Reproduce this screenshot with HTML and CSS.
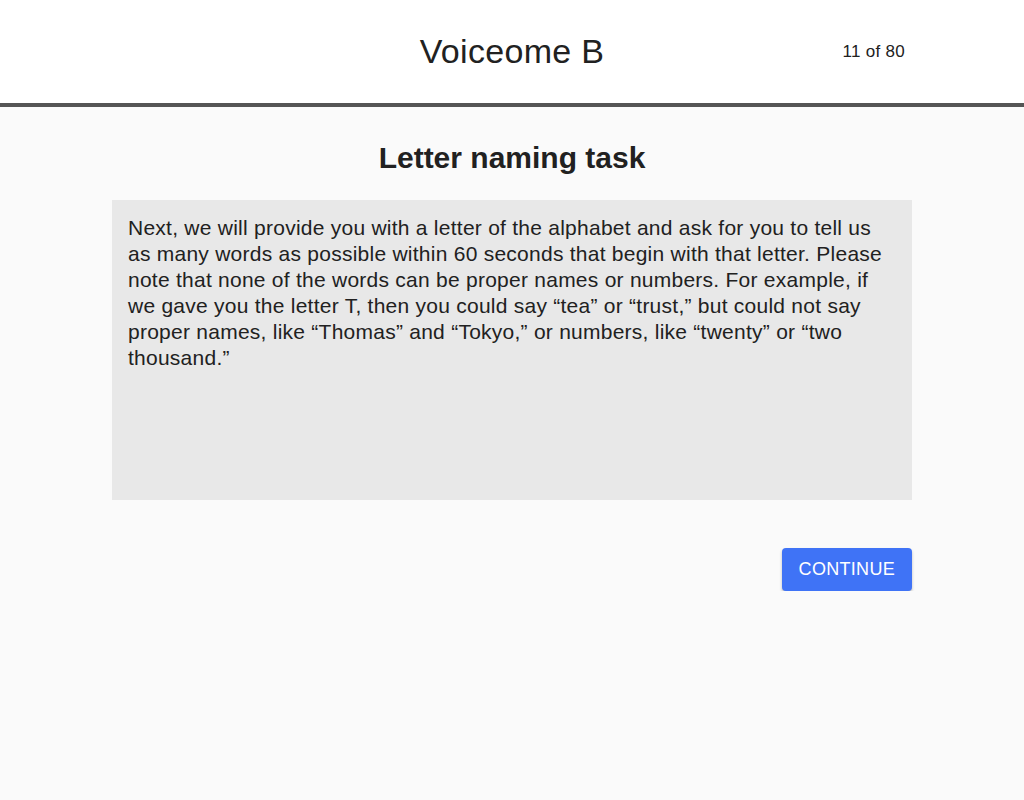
FILE: index.html
```html
<!DOCTYPE html>
<html>
<head>
<meta charset="utf-8">
<link rel="stylesheet" href="styles.css">
</head>
<body>
<header class="topbar">
  <div class="topbar-inner">
    <h1 class="app-title">Voiceome B</h1>
    <div class="progress">11 of 80</div>
  </div>
</header>
<main class="content">
  <h2 class="task-title">Letter naming task</h2>
  <div class="instructions">
    Next, we will provide you with a letter of the alphabet and ask for you to tell us as many words as possible within 60 seconds that begin with that letter. Please note that none of the words can be proper names or numbers. For example, if we gave you the letter T, then you could say “tea” or “trust,” but could not say proper names, like “Thomas” and “Tokyo,” or numbers, like “twenty” or “two thousand.”
  </div>
  <div class="actions">
    <button class="btn-continue">CONTINUE</button>
  </div>
</main>
</body>
</html>
```
FILE: styles.css
```css
html, body {
  margin: 0;
  padding: 0;
  background: #fafafa;
  font-family: "Liberation Sans", Arial, sans-serif;
  color: #212121;
}
.topbar {
  background: #ffffff;
  height: 103px;
  border-bottom: 4px solid #555555;
}
.topbar-inner {
  position: relative;
  width: 800px;
  margin: 0 auto;
  height: 100%;
  display: flex;
  align-items: center;
  justify-content: center;
}
.app-title {
  margin: 0;
  font-size: 34px;
  font-weight: 400;
  letter-spacing: 0.3px;
  color: #212121;
}
.progress {
  position: absolute;
  right: 7px;
  top: 50%;
  transform: translateY(-50%);
  font-size: 17px;
  letter-spacing: 0.3px;
}
.content {
  width: 800px;
  margin: 0 auto;
}
.task-title {
  margin: 0;
  padding-top: 36px;
  height: 57px;
  font-size: 30px;
  font-weight: 700;
  text-align: center;
  line-height: 30px;
}
.instructions {
  background: #e8e8e8;
  height: 300px;
  box-sizing: border-box;
  padding: 15px 16px;
  font-size: 21px;
  letter-spacing: 0.25px;
  line-height: 26px;
}
.actions {
  display: flex;
  justify-content: flex-end;
  padding-top: 48px;
}
.btn-continue {
  background: #3f73f6;
  color: #ffffff;
  border: none;
  border-radius: 4px;
  height: 43px;
  padding: 0 17px;
  font-family: "Liberation Sans", Arial, sans-serif;
  font-size: 18px;
  letter-spacing: 0.3px;
  box-shadow: 0 2px 3px rgba(0,0,0,0.25);
}
```
